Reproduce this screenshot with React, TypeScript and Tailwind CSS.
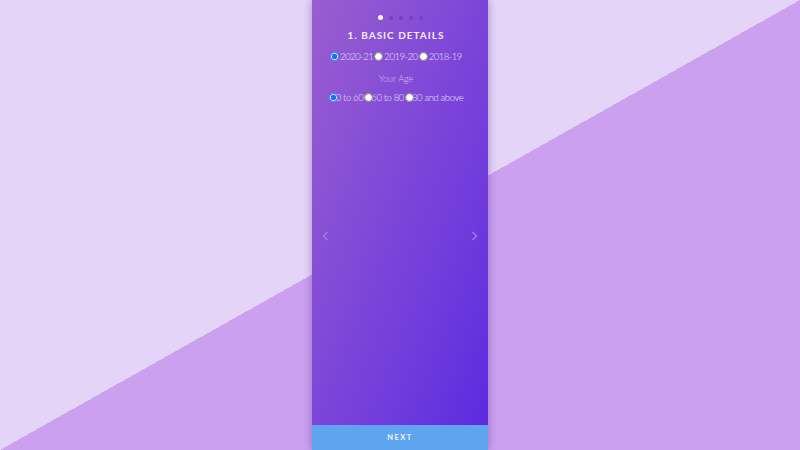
import React from "react";

function Radio({ checked, label, name, overlap }: { checked?: boolean; label: string; name: string; overlap?: boolean }) {
  return (
    <label className="flex items-center">
      <input
        type="radio"
        name={name}
        defaultChecked={checked}
        className={
          overlap
            ? "w-[9px] h-[9px] m-0 mr-[-2px] relative z-10 accent-[#1a73e8]"
            : "w-[9px] h-[9px] m-0 mr-[1px] accent-[#1a73e8]"
        }
      />
      <span>{label}</span>
    </label>
  );
}

function Chevron({ dir }: { dir: "left" | "right" }) {
  return (
    <svg width="7" height="10" viewBox="0 0 7 10" fill="none" stroke="#a47ee8" strokeWidth="1.3">
      {dir === "left" ? <path d="M5.5 1 L1.5 5 L5.5 9" /> : <path d="M1.5 1 L5.5 5 L1.5 9" />}
    </svg>
  );
}

export default function App() {
  return (
    <div className="w-[800px] h-[450px] overflow-hidden flex justify-center bg-[linear-gradient(to_bottom_right,#e4d4f7_50%,#caa0ef_50%)] font-['Lato','Open_Sans',sans-serif]">
      <div className="w-[176px] h-[450px] flex flex-col relative bg-linear-to-br from-[#9a5dcf] via-[#7b44d9] to-[#5c26e0] shadow-[0_0_8px_rgba(60,0,100,0.35)]">
        <div className="flex-1 flex flex-col items-center">
          <div className="flex gap-[6px] mt-[15px] items-center">
            <span className="w-[5px] h-[5px] rounded-full bg-white" />
            <span className="w-[4px] h-[4px] rounded-full bg-[#7a3cc0]" />
            <span className="w-[4px] h-[4px] rounded-full bg-[#7a3cc0]" />
            <span className="w-[4px] h-[4px] rounded-full bg-[#7a3cc0]" />
            <span className="w-[4px] h-[4px] rounded-full bg-[#7a3cc0]" />
          </div>
          <div className="w-full pr-[8px] flex flex-col items-center">
            <div className="mt-[10px] text-[10px] font-bold tracking-[0.1em] text-[#f3ecfb] leading-none">
              1. BASIC DETAILS
            </div>
            <div className="mt-[12px] flex items-center gap-[1px] text-[9.5px] font-light text-[#ece2f8] leading-none tracking-[-0.05em]">
              <Radio name="year" checked label="2020-21" />
              <Radio name="year" label="2019-20" />
              <Radio name="year" label="2018-19" />
            </div>
            <div className="mt-[12px] text-[9px] font-light text-[#d6c2f2] leading-none">Your Age</div>
            <div className="mt-[10px] flex items-center gap-[1px] text-[9.5px] font-light text-[#ece2f8] leading-none tracking-[-0.04em]">
              <Radio name="age" checked overlap label="0 to 60" />
              <Radio name="age" overlap label="60 to 80" />
              <Radio name="age" overlap label="80 and above" />
            </div>
          </div>
        </div>
        <div className="absolute left-[10px] top-[231px]">
          <Chevron dir="left" />
        </div>
        <div className="absolute right-[10px] top-[231px]">
          <Chevron dir="right" />
        </div>
        <div className="h-[25px] bg-[#5ea4ee] flex items-center justify-center text-[7.5px] font-bold tracking-[0.2em] text-[#eef5fd]">
          NEXT
        </div>
      </div>
    </div>
  );
}
